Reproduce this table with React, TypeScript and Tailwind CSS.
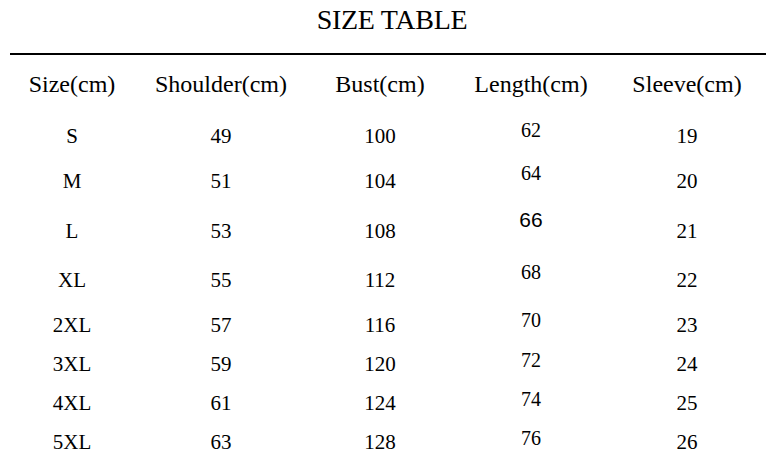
import React from "react";

const rows: { size: string; sh: string; bust: string; len: string; sl: string; h: string; pb: string; sans?: boolean }[] = [
  { size: "S", sh: "49", bust: "100", len: "62", sl: "19", h: "h-[48px]", pb: "pb-[6px]" },
  { size: "M", sh: "51", bust: "104", len: "64", sl: "20", h: "h-[45px]", pb: "pb-[8px]" },
  { size: "L", sh: "53", bust: "108", len: "66", sl: "21", h: "h-[50px]", pb: "pb-[11px]", sans: true },
  { size: "XL", sh: "55", bust: "112", len: "68", sl: "22", h: "h-[49px]", pb: "pb-[8px]" },
  { size: "2XL", sh: "57", bust: "116", len: "70", sl: "23", h: "h-[45px]", pb: "pb-[5px]" },
  { size: "3XL", sh: "59", bust: "120", len: "72", sl: "24", h: "h-[39px]", pb: "pb-[4px]" },
  { size: "4XL", sh: "61", bust: "124", len: "74", sl: "25", h: "h-[39px]", pb: "pb-[4px]" },
  { size: "5XL", sh: "63", bust: "128", len: "76", sl: "26", h: "h-[39px]", pb: "pb-[4px]" },
];

const cols = "grid grid-cols-[144px_154px_164px_138px_174px]";

export default function App() {
  return (
    <div className="w-[777px] h-[463px] bg-white text-black font-['Liberation_Serif','Times_New_Roman',serif] overflow-hidden">
      <div className="h-[40px] text-[28px] leading-[40px] text-center pl-[7px] tracking-[-0.3px]">SIZE TABLE</div>
      <div className="mt-[13px] ml-[10px] w-[756px] h-[2px] bg-black" />
      <div className={`${cols} mt-[13px] h-[32px] text-[24px] leading-[32px] text-center`}>
        <div>Size(cm)</div>
        <div>Shoulder(cm)</div>
        <div>Bust(cm)</div>
        <div>Length(cm)</div>
        <div>Sleeve(cm)</div>
      </div>
      {rows.map((r) => (
        <div key={r.size} className={`${cols} ${r.h} items-end text-[21px] leading-[24px] text-center`}>
          <div>{r.size}</div>
          <div>{r.sh}</div>
          <div>{r.bust}</div>
          <div
            className={`${r.pb} ${
              r.sans ? "font-['Liberation_Sans',Arial,sans-serif] text-[21px]" : "text-[20px]"
            }`}
          >
            {r.len}
          </div>
          <div>{r.sl}</div>
        </div>
      ))}
    </div>
  );
}
